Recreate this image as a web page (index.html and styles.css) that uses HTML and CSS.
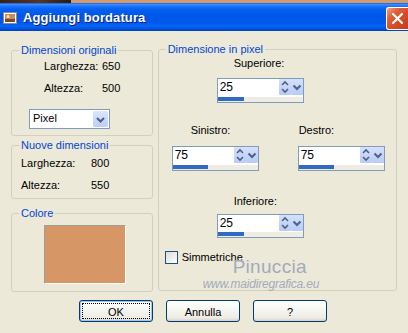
FILE: index.html
```html
<!DOCTYPE html>
<html lang="it">
<head>
    <meta charset="UTF-8">
    <title>Aggiungi bordatura</title>
    <link rel="stylesheet" href="styles.css">
</head>
<body>

    <div class="top-strip"></div>

    <div class="titlebar">
        <svg class="app-icon" width="16" height="16" viewBox="0 0 16 16">
            <rect x="1.5" y="2.5" width="13" height="11" fill="#fff" stroke="#8c8c8c"/>
            <rect x="3" y="4" width="10" height="8" fill="#c98a5c"/>
            <rect x="3" y="9" width="10" height="3" fill="#7a4a2a"/>
            <circle cx="6" cy="6.5" r="1.5" fill="#f4e2c0"/>
        </svg>
        <span class="title">Aggiungi bordatura</span>
        <span class="close-btn">
            <svg width="21" height="21" viewBox="0 0 21 21">
                <path d="M6 6 L15 15 M15 6 L6 15" stroke="#fff" stroke-width="2.2" stroke-linecap="round"/>
            </svg>
        </span>
    </div>

    <div class="dialog">
        <div class="columns">
            <div class="left-col">
                <div class="group group-orig">
                    <span class="legend">Dimensioni originali</span>
                    <div class="dims dims-orig">
                        <span>Larghezza:</span><span>650</span>
                        <span>Altezza:</span><span>500</span>
                    </div>
                    <div class="combo">
                        <span class="combo-text">Pixel</span>
                        <span class="combo-btn">
                            <svg width="15" height="17" viewBox="0 0 15 17"><path d="M4 7 L7.5 10.5 L11 7" fill="none" stroke="#4d6185" stroke-width="2"/></svg>
                        </span>
                    </div>
                </div>

                <div class="group group-new">
                    <span class="legend">Nuove dimensioni</span>
                    <div class="dims dims-new">
                        <span>Larghezza:</span><span>800</span>
                        <span>Altezza:</span><span>550</span>
                    </div>
                </div>

                <div class="group group-color">
                    <span class="legend">Colore</span>
                    <div class="swatch"></div>
                </div>
            </div>

            <div class="group group-pixel">
                <span class="legend">Dimensione in pixel</span>

                <div class="label label-top">Superiore:</div>
                <div class="spin spin-top">
                    <div class="spin-row">
                        <span class="spin-value">25</span>
                        <span class="spin-arrows">
                            <svg width="12" height="16" viewBox="0 0 12 16"><path d="M3 6 L6 3 L9 6 M3 10 L6 13 L9 10" fill="none" stroke="#4d6185" stroke-width="1.6"/></svg>
                        </span>
                        <span class="spin-drop">
                            <svg width="12" height="16" viewBox="0 0 12 16"><path d="M2.5 6.5 L6 10 L9.5 6.5" fill="none" stroke="#4d6185" stroke-width="2"/></svg>
                        </span>
                    </div>
                    <div class="track"><div class="fill" style="width: 26px"></div></div>
                </div>

                <div class="side-row">
                    <div class="side">
                        <div class="label label-left">Sinistro:</div>
                        <div class="spin">
                            <div class="spin-row">
                                <span class="spin-value">75</span>
                                <span class="spin-arrows">
                                    <svg width="12" height="16" viewBox="0 0 12 16"><path d="M3 6 L6 3 L9 6 M3 10 L6 13 L9 10" fill="none" stroke="#4d6185" stroke-width="1.6"/></svg>
                                </span>
                                <span class="spin-drop">
                                    <svg width="12" height="16" viewBox="0 0 12 16"><path d="M2.5 6.5 L6 10 L9.5 6.5" fill="none" stroke="#4d6185" stroke-width="2"/></svg>
                                </span>
                            </div>
                            <div class="track"><div class="fill" style="width: 35px"></div></div>
                        </div>
                    </div>
                    <div class="side side-right">
                        <div class="label label-right">Destro:</div>
                        <div class="spin">
                            <div class="spin-row">
                                <span class="spin-value">75</span>
                                <span class="spin-arrows">
                                    <svg width="12" height="16" viewBox="0 0 12 16"><path d="M3 6 L6 3 L9 6 M3 10 L6 13 L9 10" fill="none" stroke="#4d6185" stroke-width="1.6"/></svg>
                                </span>
                                <span class="spin-drop">
                                    <svg width="12" height="16" viewBox="0 0 12 16"><path d="M2.5 6.5 L6 10 L9.5 6.5" fill="none" stroke="#4d6185" stroke-width="2"/></svg>
                                </span>
                            </div>
                            <div class="track"><div class="fill" style="width: 35px"></div></div>
                        </div>
                    </div>
                </div>

                <div class="label label-bottom">Inferiore:</div>
                <div class="spin spin-bottom">
                    <div class="spin-row">
                        <span class="spin-value">25</span>
                        <span class="spin-arrows">
                            <svg width="12" height="16" viewBox="0 0 12 16"><path d="M3 6 L6 3 L9 6 M3 10 L6 13 L9 10" fill="none" stroke="#4d6185" stroke-width="1.6"/></svg>
                        </span>
                        <span class="spin-drop">
                            <svg width="12" height="16" viewBox="0 0 12 16"><path d="M2.5 6.5 L6 10 L9.5 6.5" fill="none" stroke="#4d6185" stroke-width="2"/></svg>
                        </span>
                    </div>
                    <div class="track"><div class="fill" style="width: 26px"></div></div>
                </div>

                <label class="check">
                    <span class="check-box"></span>
                    <span>Simmetriche</span>
                </label>

                <div class="watermark">
                    <div class="wm-name">Pinuccia</div>
                    <div class="wm-url">www.maidiregrafica.eu</div>
                </div>
            </div>
        </div>

        <div class="buttons">
            <button class="btn btn-default"><span>OK</span></button>
            <button class="btn"><span>Annulla</span></button>
            <button class="btn"><span>?</span></button>
        </div>
    </div>

</body>
</html>
```

FILE: styles.css
```css
body {
    margin: 0;
    width: 408px;
    height: 333px;
    overflow: hidden;
    background-color: #ece9d8;
    font-family: "Liberation Sans", Arial, sans-serif;
    font-size: 11px;
    line-height: 13px;
    color: #000;
}
.top-strip {
    height: 3px;
    background: linear-gradient(to right, #3b2214 0, #5a3420 40px, #2a1a10 71px, #d59a6c 71px, #d59a6c 100%);
}
.titlebar {
    height: 28px;
    display: flex;
    align-items: center;
    background: linear-gradient(to bottom, #0a5ce8 0%, #3a8eff 5%, #1a74fb 12%, #0561ef 22%, #0056e6 45%, #0058ed 70%, #0564f6 82%, #0053dc 93%, #0043b4 100%);
}
.app-icon {
    margin-left: 2px;
    margin-top: 1px;
}
.title {
    margin-left: 5px;
    margin-top: 1px;
    color: #fff;
    font-weight: bold;
    font-size: 13px;
    letter-spacing: 0.1px;
    text-shadow: 1px 1px 0 #0a1e8c;
    flex: 1;
}
.close-btn {
    width: 21px;
    height: 21px;
    margin-top: 2px;
    border: 1px solid #fff;
    border-right: none;
    border-radius: 3px 0 0 3px;
    background: linear-gradient(135deg, #f0a088 0%, #e0603a 30%, #d54a22 60%, #c0401c 100%);
}
.close-btn svg {
    display: block;
}

.dialog {
    padding: 18px 11px 0 11px;
}
.columns {
    display: flex;
    gap: 5px;
    align-items: flex-start;
}
.left-col {
    width: 142px;
    margin-top: 1px;
    display: flex;
    flex-direction: column;
}
.group {
    position: relative;
    box-sizing: border-box;
    border: 1px solid #d0d0bf;
    border-radius: 3px;
}
.legend {
    position: absolute;
    top: -7px;
    left: 7px;
    padding: 0 2px;
    background-color: #ece9d8;
    color: #0046d5;
}

.group-orig {
    height: 86px;
    padding: 9px 0 0 17px;
}
.dims {
    display: grid;
    row-gap: 9px;
}
.dims-orig {
    grid-template-columns: 58px 30px;
    margin-left: 15px;
}
.combo {
    display: flex;
    width: 81px;
    height: 20px;
    margin-top: 14px;
    box-sizing: border-box;
    border: 1px solid #7f9db9;
    background-color: #fff;
}
.combo-text {
    flex: 1;
    padding: 2px 0 0 3px;
}
.combo-btn {
    width: 15px;
    margin: 1px;
    border-radius: 2px;
    background: linear-gradient(to bottom, #dce6fd, #bccdf9);
}
.combo-btn svg {
    display: block;
    margin-top: -0.5px;
}

.group-new {
    height: 54px;
    margin-top: 9px;
    padding: 11px 0 0 9px;
}
.dims-new {
    grid-template-columns: 70px 30px;
}

.group-color {
    height: 79px;
    margin-top: 14px;
    padding: 11px 0 0 32px;
}
.swatch {
    width: 82px;
    height: 59px;
    box-sizing: border-box;
    border-top: 1px solid #a09e90;
    border-left: 1px solid #a09e90;
    border-bottom: 1px solid #fff;
    border-right: 1px solid #fff;
    background-color: #d79665;
}

.group-pixel {
    width: 240px;
    height: 242px;
    padding-top: 7px;
}
.label-top,
.label-bottom {
    margin-left: 75px;
}
.spin {
    width: 87px;
    height: 25px;
    box-sizing: border-box;
    border: 1px solid #7f9db9;
    background-color: #fff;
    display: flex;
    flex-direction: column;
}
.spin-top {
    margin: 8px 0 0 58px;
}
.spin-bottom {
    margin: 6px 0 0 58px;
    height: 24px;
}
.spin-row {
    flex: 1;
    display: flex;
    align-items: flex-start;
}
.spin-value {
    flex: 1;
    padding: 2px 0 0 2px;
    font-size: 12px;
}
.spin-arrows,
.spin-drop {
    width: 12px;
    height: 16px;
    background: linear-gradient(to bottom, #d4e0fd, #b8cbf7);
    border-radius: 1px;
}
.spin-arrows svg,
.spin-drop svg {
    display: block;
}
.track {
    height: 5px;
    background-color: #efede3;
}
.fill {
    height: 4px;
    background-color: #316ac5;
}

.side-row {
    display: flex;
    margin-top: 21px;
    margin-left: 13px;
    gap: 39px;
}
.label-left {
    margin-left: 19px;
}
.label-right {
    margin-left: 1px;
}
.side .spin {
    margin-top: 9px;
}
.label-bottom {
    margin-top: 24px;
}

.check {
    display: flex;
    align-items: center;
    gap: 4px;
    margin: 13px 0 0 6px;
}
.check-box {
    width: 13px;
    height: 13px;
    box-sizing: border-box;
    border: 1px solid #1c5180;
    background: linear-gradient(135deg, #dcdcd6, #fff);
}

/* watermark stamped over the lower part of the group */
.watermark {
    position: absolute;
    left: 44px;
    top: 209px;
    width: 122px;
    color: #a4aabc;
}
.wm-name {
    margin-left: 30px;
    font-size: 19px;
    line-height: 16px;
    letter-spacing: 0.3px;
}
.wm-url {
    margin-top: 3px;
    font-size: 12px;
    line-height: 13px;
    font-style: italic;
    letter-spacing: -0.2px;
}

.buttons {
    display: flex;
    gap: 13px;
    margin-top: 8px;
    padding-left: 68px;
}
.btn {
    width: 74px;
    height: 22px;
    padding: 2px;
    border: 1px solid #003c74;
    border-radius: 3px;
    background: linear-gradient(to bottom, #ffffff 0%, #f7f7f3 40%, #ecebe4 85%, #d6d0c5 100%);
    font-family: "Liberation Sans", Arial, sans-serif;
    font-size: 11px;
    color: #000;
}
.btn span {
    display: block;
    height: 100%;
    line-height: 16px;
    box-sizing: border-box;
    border: 1px solid transparent;
}
.btn-default {
    box-shadow: inset 0 0 0 1px #a8c4ee;
}
.btn-default span {
    border: 1px dotted #000;
}
```
